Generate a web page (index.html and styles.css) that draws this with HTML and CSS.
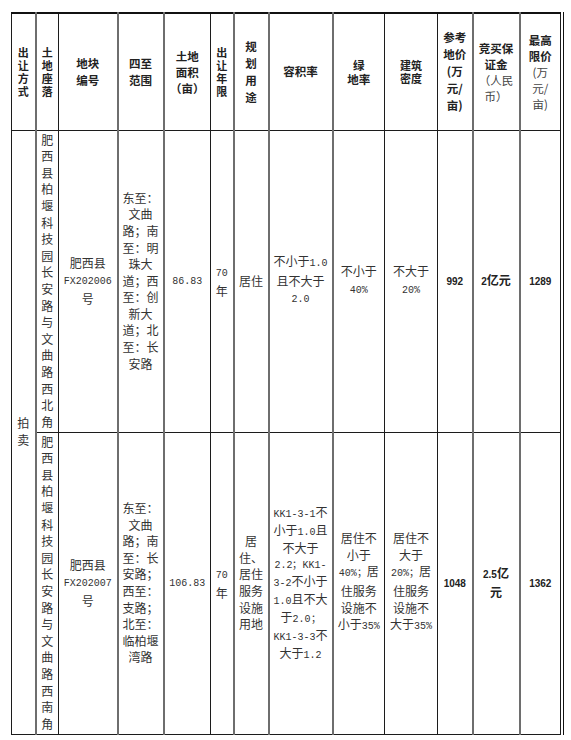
FILE: index.html
```html
<!DOCTYPE html>
<html lang="zh-CN">
<head>
<meta charset="utf-8">
<title>出让地块</title>
<link rel="stylesheet" href="styles.css">
</head>
<body>
<div class="frame">
<table class="land">
<colgroup>
<col class="w24">
<col class="w23 gl">
<col class="w59">
<col class="w46 gl">
<col class="w47 gl">
<col class="w23">
<col class="w35 gl">
<col class="w64 gl">
<col class="w52 gl">
<col class="w53">
<col class="w35">
<col class="w47 gl">
<col class="w41 gl">
</colgroup>
<thead>
<tr class="hrow">
<th class="lh13">出<br>让<br>方<br>式</th>
<th class="lh13">土<br>地<br>座<br>落</th>
<th>地块<br>编号</th>
<th>四至<br>范围</th>
<th class="lh16">土地<br>面积<br>（亩）</th>
<th class="lh13">出<br>让<br>年<br>限</th>
<th>规<br>划<br>用<br>途</th>
<th>容积率</th>
<th class="lh14">绿<br>地率</th>
<th class="lh13">建筑<br>密度</th>
<th>参考<br>地价<br>(万<br>元/<br>亩)</th>
<th class="lh16">竞买保<br>证金<br><span class="thin">（人民<br>币）</span></th>
<th class="lh16">最高<br>限价<br><span class="thin">(万<br>元/<br>亩)</span></th>
</tr>
</thead>
<tbody>
<tr class="drow">
<td rowspan="2" class="narrow">拍<br>卖</td>
<td class="narrow">肥西县柏堰科技园长安路与文曲路西北角</td>
<td>肥西县<br><span class="m">FX202006</span><br>号</td>
<td>东至：<br>文曲<br>路；南<br>至：明<br>珠大<br>道；西<br>至：创<br>新大<br>道；北<br>至：长<br>安路</td>
<td><span class="m">86.83</span></td>
<td><span class="m">70</span><br>年</td>
<td>居住</td>
<td>不小于<span class="m">1.0</span><br>且不大于<br><span class="m">2.0</span></td>
<td>不小于<br><span class="m">40%</span></td>
<td>不大于<br><span class="m">20%</span></td>
<td class="bold"><span class="n">992</span></td>
<td class="bold"><span class="n">2</span>亿元</td>
<td class="bold"><span class="n">1289</span></td>
</tr>
<tr class="drow">
<td class="narrow">肥西县柏堰科技园长安路与文曲路西南角</td>
<td>肥西县<br><span class="m">FX202007</span><br>号</td>
<td>东至：<br>文曲<br>路；南<br>至：长<br>安路；<br>西至：<br>支路；<br>北至：<br>临柏堰<br>湾路</td>
<td><span class="m">106.83</span></td>
<td><span class="m">70</span><br>年</td>
<td>居<br>住、<br>居住<br>服务<br>设施<br>用地</td>
<td class="lh15"><span class="m">KK1-3-1</span>不<br>小于<span class="m">1.0</span>且<br>不大于<br><span class="m">2.2；KK1-</span><br><span class="m">3-2</span>不小于<br><span class="m">1.0</span>且不大<br>于<span class="m">2.0；</span><br><span class="m">KK1-3-3</span>不<br>大于<span class="m">1.2</span></td>
<td>居住不<br>小于<br><span class="m">40%；</span>居<br>住服务<br>设施不<br>小于<span class="m">35%</span></td>
<td>居住不<br>大于<br><span class="m">20%；</span>居<br>住服务<br>设施不<br>大于<span class="m">35%</span></td>
<td class="bold"><span class="n">1048</span></td>
<td class="bold"><span class="n">2.5</span>亿<br>元</td>
<td class="bold"><span class="n">1362</span></td>
</tr>
</tbody>
</table>
</div>
</body>
</html>
```

FILE: styles.css
```css
body {
  margin: 0;
  background: #fff;
  font-family: "Noto Sans CJK SC", "Noto Sans", sans-serif;
  color: #333;
}

.frame {
  display: inline-block;
  margin: 12px 0 0 11px;
  border-right: 1px solid #111;
  padding-right: 2px;
}

.land {
  border-collapse: collapse;
  table-layout: fixed;
  width: 549px;
  border-top: 2px solid #111;
  border-left: 1px solid #111;
  border-bottom: 1px solid #111;
}

.w24 { width: 24px; }
.w23 { width: 23px; }
.w59 { width: 59px; }
.w46 { width: 46px; }
.w47 { width: 47px; }
.w35 { width: 35px; }
.w64 { width: 64px; }
.w52 { width: 52px; }
.w53 { width: 53px; }
.w41 { width: 41px; }

.gl { border-left: 2px solid #6e6e6e; }

.land th,
.land td {
  border: 1px solid #1c1c1c;
  padding: 0 1px;
  text-align: center;
  vertical-align: middle;
  font-size: 12px;
  line-height: 16.6px;
  white-space: normal;
  word-break: break-all;
}

.land th {
  font-weight: 700;
  font-size: 11.5px;
  color: #222;
  line-height: 17px;
}

.hrow { height: 117px; }
.drow { height: 302px; }

.land th.lh13 { font-size: 11px; line-height: 13px; }
.land th.lh14 { line-height: 14px; }
.land th.lh16 { line-height: 16px; }
.land td.lh15 { line-height: 15px; }

.thin { font-weight: 400; color: #444; }

.narrow { padding: 0; }

.m {
  font-family: "Liberation Mono", "DejaVu Sans Mono", monospace;
  font-size: 10px;
}

.bold { font-weight: 700; color: #222; }

.n {
  font-family: "Liberation Sans", Arial, sans-serif;
  font-size: 10px;
  font-weight: 700;
}
```
